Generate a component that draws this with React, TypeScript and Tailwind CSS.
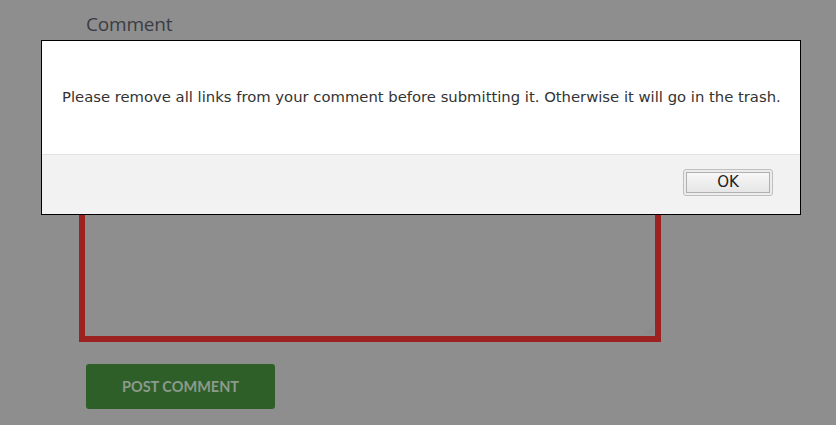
import React from "react";

export default function App() {
  return (
    <div className="relative w-[836px] h-[425px] overflow-hidden bg-[#8e8e8e]">
      <div className="pl-[79px] pt-[12px] flex flex-col">
        <div className="pl-[7px] text-[19px] leading-[24px] text-[#3b3d44] font-['Open_Sans',sans-serif] tracking-[-0.2px]">
          Comment
        </div>
        <div className="mt-[6px] w-[582px] h-[300px] border-[6px] border-[#9c2121] relative">
          <svg className="absolute right-[1px] bottom-[1px]" width="10" height="10" viewBox="0 0 10 10">
            <path d="M9 2 L2 9 M9 5 L5 9 M9 8 L8 9" stroke="#7c7c7c" strokeWidth="1" strokeDasharray="1 1" />
          </svg>
        </div>
        <div className="mt-[22px] ml-[7px] w-[189px] h-[45px] rounded-[3px] bg-[#2e5f29] flex items-center justify-center text-[14.5px] font-bold text-[#8d9a8c] font-['Lato',sans-serif]">
          POST COMMENT
        </div>
      </div>

      <div className="absolute left-[41px] top-[40px] w-[760px] h-[175px] border border-black bg-white flex flex-col font-['DejaVu_Sans',sans-serif]">
        <div className="h-[113px] flex items-center pl-[20px] text-[14.8px] text-[#333333]">
          Please remove all links from your comment before submitting it. Otherwise it will go in the trash.
        </div>
        <div className="flex-1 bg-[#f2f2f2] border-t border-[#e3e3e3] flex items-start justify-end pr-[27px] pt-[14px]">
          <div className="w-[90px] h-[27px] rounded-[3px] border border-[#c0c0c0] p-[2px] bg-[#ececec]">
            <div className="w-full h-full border border-[#b0b0b0] bg-gradient-to-b from-[#f7f7f7] to-[#e6e6e6] flex items-center justify-center text-[15px] text-[#222222]">
              OK
            </div>
          </div>
        </div>
      </div>
    </div>
  );
}
